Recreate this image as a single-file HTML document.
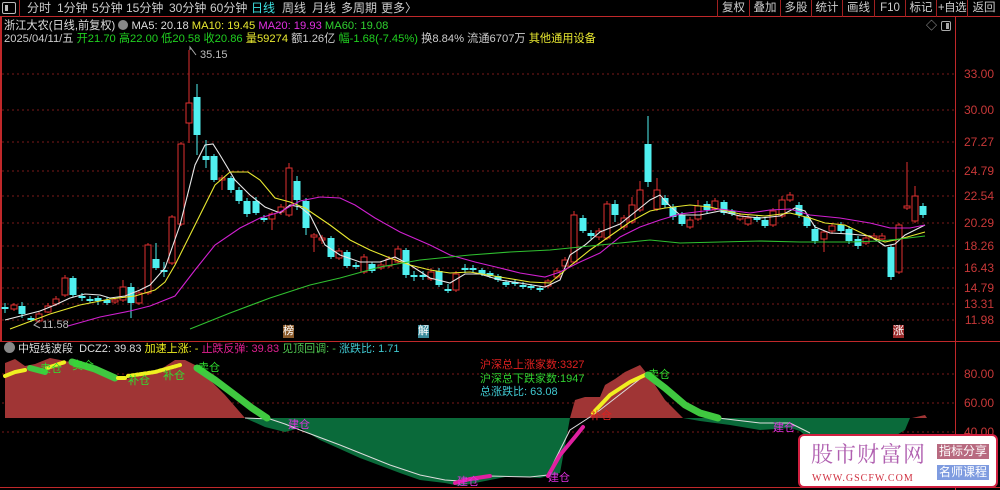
<!DOCTYPE html>
<html><head><meta charset="utf-8">
<style>
*{margin:0;padding:0;box-sizing:border-box}
body{width:1000px;height:490px;background:#000;overflow:hidden;position:relative;font-family:"Liberation Sans","Noto Sans CJK SC",sans-serif;font-size:12px;color:#ccc}
.t{position:absolute;white-space:nowrap;line-height:14px}
#tb{position:absolute;left:0;top:0;width:1000px;height:17px;border-bottom:1px solid #c0282a}
#tb span{position:absolute;top:1px;font-size:12px;line-height:14px;color:#ccc;white-space:nowrap}
.btn{position:absolute;top:0;height:17px;border-left:1px solid #a02020;color:#ccc;font-size:11.5px;text-align:center;line-height:16px;white-space:nowrap;overflow:visible}
.ax{position:absolute;right:6px;color:#c83838;font-size:12px;line-height:12px}
</style></head><body>
<div id="tb">
<div style="position:absolute;left:2px;top:2px;width:14px;height:12px;border:1px solid #bbb;border-radius:2px"><div style="position:absolute;left:2px;top:2px;width:3px;height:6px;background:#bbb"></div></div>
<div style="position:absolute;left:19px;top:0;width:1px;height:17px;background:#a02020"></div>
<span style="left:27px">分时</span><span style="left:57px">1分钟</span><span style="left:92px">5分钟</span><span style="left:126px">15分钟</span><span style="left:169px">30分钟</span><span style="left:210px">60分钟</span><span style="left:251px;color:#3ee0e0">日线</span><span style="left:282px">周线</span><span style="left:312px">月线</span><span style="left:341px">多周期</span><span style="left:381px">更多〉</span>
<div class="btn" style="left:717px;width:32px">复权</div><div class="btn" style="left:749px;width:31px">叠加</div><div class="btn" style="left:780px;width:31px">多股</div><div class="btn" style="left:811px;width:31px">统计</div><div class="btn" style="left:842px;width:32px">画线</div><div class="btn" style="left:874px;width:31px">F10</div><div class="btn" style="left:905px;width:31px">标记</div><div class="btn" style="left:936px;width:31px;letter-spacing:-0.5px">+自选</div><div class="btn" style="left:967px;width:33px">返回</div>
</div>
<div style="position:absolute;left:0;top:17px;width:2px;height:325px;background:#c0282a"></div>
<div style="position:absolute;left:955px;top:17px;width:1px;height:473px;background:#c0282a"></div>
<div style="position:absolute;left:0;top:341px;width:1000px;height:1px;background:#c0282a"></div>
<div style="position:absolute;left:0;top:487px;width:1000px;height:1px;background:#c0282a"></div>
<div class="t" style="left:4px;top:19px;color:#ddd;font-size:11.2px">浙江大农(日线,前复权) <span style="display:inline-block;width:10px;height:10px;border-radius:50%;background:#888;vertical-align:-1px"></span> MA5: 20.18 <span style="color:#e8e830">MA10: 19.45</span> <span style="color:#e030e0">MA20: 19.93</span> <span style="color:#30d030">MA60: 19.08</span></div>
<div class="t" style="left:4px;top:32px;color:#ccc;font-size:11.2px">2025/04/11/五 <span style="color:#20d020">开21.70 高22.00 低20.58 收20.86</span> <span style="color:#e8e830">量59274</span> 额1.26亿 <span style="color:#20d020">幅-1.68(-7.45%)</span> 换8.84% 流通6707万 <span style="color:#e8e830">其他通用设备</span></div>
<div class="t" style="left:926px;top:19px;color:#aaa;font-size:11px">◇</div>
<div style="position:absolute;left:941px;top:21px;width:10px;height:10px;border:1px solid #aaa;border-radius:2px"><div style="position:absolute;right:1px;top:1px;width:3px;height:6px;background:#aaa"></div></div>

<svg width="1000" height="490" style="position:absolute;left:0;top:0" id="sv">
<g stroke="#7a1a1a" stroke-dasharray="2,3" stroke-width="1">
<line x1="2" x2="955" y1="74" y2="74"/><line x1="2" x2="955" y1="110" y2="110"/><line x1="2" x2="955" y1="142" y2="142"/><line x1="2" x2="955" y1="171" y2="171"/><line x1="2" x2="955" y1="196" y2="196"/><line x1="2" x2="955" y1="223" y2="223"/><line x1="2" x2="955" y1="246" y2="246"/><line x1="2" x2="955" y1="268" y2="268"/><line x1="2" x2="955" y1="288" y2="288"/><line x1="2" x2="955" y1="304" y2="304"/><line x1="2" x2="955" y1="320" y2="320"/>
<line x1="2" x2="955" y1="374" y2="374"/><line x1="2" x2="955" y1="403" y2="403"/><line x1="2" x2="955" y1="432" y2="432"/>
</g>
<g id="cd"></g>
<g fill="none" stroke-width="1.1">
<polyline stroke="#e8e8e8" points="5,320 40,311 55,305 70,298 85,294 100,295 110,298 125,296 140,290 150,285 165,268 180,225 195,165 205,145 213,144 220,155 235,180 250,195 265,207 280,213 290,205 300,207 310,215 325,245 340,255 360,262 380,262 395,257 410,265 430,278 450,283 465,274 480,274 500,280 520,283 545,287 560,280 570,255 585,245 600,232 620,224 640,208 650,200 660,195 670,206 680,215 700,215 720,211 740,216 760,218 780,216 795,208 805,211 815,227 830,233 850,234 870,236 885,246 895,244 905,235 915,230 925,225"/>
<polyline stroke="#e8e830" points="10,329 50,314 80,305 110,299 135,296 155,290 165,282 175,265 195,225 215,185 230,172 248,172 260,180 275,198 290,202 305,208 330,225 350,240 370,250 390,258 410,265 430,270 450,273 470,272 500,277 530,282 550,283 570,266 590,250 610,236 630,222 650,211 665,208 690,205 710,207 740,214 765,216 790,213 810,218 825,223 845,225 870,237 885,242 900,239 925,232"/>
<polyline stroke="#d020d0" points="68,326 100,317 130,311 150,306 175,296 195,270 215,245 240,228 260,218 280,212 300,201 320,197 340,198 355,205 375,218 400,232 430,245 450,255 475,262 500,268 520,273 545,277 560,272 580,262 600,253 620,237 640,227 660,220 680,214 720,209 750,213 770,210 790,209 810,215 840,218 870,223 890,228 910,228 925,225"/>
<polyline stroke="#30c030" points="190,329 230,313 270,298 310,285 340,278 380,267 420,260 470,255 510,252 550,250 590,246 620,243 650,240 680,243 720,242 760,241 800,242 850,242 880,241 900,239 925,236"/>
</g>
<g stroke="#aaa" fill="none"><polyline points="190,50 190,47 196,55"/><polyline points="40,320 34,325 40,328"/></g>

<polygon fill="#a03535" points="5,418 5,363 15,359 25,366 35,364 50,358 70,362 90,364 115,378 125,379 155,373 175,360 185,360 195,365 210,380 225,395 245,418"/>
<polygon fill="#0a6a3a" points="245,418 570,418 560,473 540,478 510,476 480,482 460,486 445,483 420,480 400,473 360,458 320,440 300,428 285,432 265,427"/>
<polygon fill="#a03535" points="570,418 575,400 585,397 600,397 605,385 615,379 625,372 640,365 648,375 655,385 665,400 683,418"/>
<polygon fill="#0a6a3a" points="683,418 910,418 905,430 880,445 860,448 840,445 820,440 810,440 800,431 790,428 760,430 730,425 700,421"/>
<polygon fill="#a03535" points="912,418 925,415 927,418"/>
<polyline fill="none" stroke="#ddd" stroke-width="1" points="245,418 270,419 285,424 300,430 340,445 390,465 420,475 445,480 460,481 490,476 530,477 548,475 555,460 570,430 590,417 600,410 645,375 690,408 718,418 760,423 790,423 800,428 810,433"/>
<g fill="none" stroke-linecap="round">
<polyline stroke="#f0f020" stroke-width="4" points="5,376 15,372 25,370"/>
<polyline stroke="#40c840" stroke-width="6" points="30,368 45,372"/>
<polyline stroke="#f0f020" stroke-width="4" stroke-dasharray="2,2" points="47,368 65,362"/>
<polyline stroke="#40c840" stroke-width="7" points="72,362 95,369 115,378"/>
<polyline stroke="#f0f020" stroke-width="4" points="118,378 125,378"/>
<polyline stroke="#f0f020" stroke-width="4" stroke-dasharray="2,2" points="128,376 155,372 180,365"/>
<polyline stroke="#40c840" stroke-width="7" points="197,368 215,380 235,395 252,408 267,418"/>
<polyline stroke="#e020a0" stroke-width="4" points="455,483 470,479 490,476"/>
<polyline stroke="#e020a0" stroke-width="4" points="548,476 560,455 575,437 583,427"/>
<polyline stroke="#f0f020" stroke-width="4" points="593,413 610,395 630,382 645,375"/>
<polyline stroke="#40c840" stroke-width="7" points="648,375 665,388 685,405 700,413 718,418"/>
</g>
</svg>

<div class="t" style="left:200px;top:48px;color:#bbb;font-size:11px">35.15</div>
<div class="t" style="left:42px;top:318px;color:#bbb;font-size:11px">11.58</div>
<div class="t" style="left:283px;top:325px;width:11px;height:13px;background:#8a5a2a;color:#fff;font-size:11px;line-height:13px">榜</div>
<div class="t" style="left:418px;top:325px;width:11px;height:13px;background:#3a8a9a;color:#fff;font-size:11px;line-height:13px">解</div>
<div class="t" style="left:893px;top:325px;width:11px;height:13px;background:#9a2a2a;color:#fff;font-size:11px;line-height:13px">涨</div>

<div class="ax" style="top:68px">33.00</div><div class="ax" style="top:104px">30.00</div><div class="ax" style="top:136px">27.27</div><div class="ax" style="top:165px">24.79</div><div class="ax" style="top:190px">22.54</div><div class="ax" style="top:217px">20.29</div><div class="ax" style="top:240px">18.26</div><div class="ax" style="top:262px">16.43</div><div class="ax" style="top:282px">14.79</div><div class="ax" style="top:298px">13.31</div><div class="ax" style="top:314px">11.98</div>
<div class="ax" style="top:368px">80.00</div><div class="ax" style="top:397px">60.00</div><div class="ax" style="top:426px">40.00</div>

<div class="t" style="left:4px;top:342px;color:#ddd;font-size:11px"><span style="display:inline-block;width:11px;height:11px;border-radius:50%;background:#888;vertical-align:-1px"></span> 中短线波段 &nbsp;DCZ2: 39.83 <span style="color:#f0f020">加速上涨: -</span> <span style="color:#e02090">止跌反弹: 39.83</span> <span style="color:#50c850">见顶回调: -</span> <span style="color:#40c8d0">涨跌比: 1.71</span></div>
<div class="t" style="left:480px;top:358px;color:#e02020;font-size:11px">沪深总上涨家数:3327</div>
<div class="t" style="left:480px;top:372px;color:#30d030;font-size:11px">沪深总下跌家数:1947</div>
<div class="t" style="left:480px;top:385px;color:#40c8d0;font-size:11px">总涨跌比: 63.08</div>
<div class="t" style="left:40px;top:362px;color:#30e030;font-size:11px">卖仓</div>
<div class="t" style="left:72px;top:359px;color:#30e030;font-size:11px">卖仓</div>
<div class="t" style="left:128px;top:374px;color:#30e030;font-size:11px">补仓</div>
<div class="t" style="left:163px;top:369px;color:#30e030;font-size:11px">补仓</div>
<div class="t" style="left:198px;top:361px;color:#30e030;font-size:11px">卖仓</div>
<div class="t" style="left:288px;top:418px;color:#e030e0;font-size:11px">建仓</div>
<div class="t" style="left:457px;top:475px;color:#e030e0;font-size:11px">建仓</div>
<div class="t" style="left:548px;top:471px;color:#e030e0;font-size:11px">建仓</div>
<div class="t" style="left:590px;top:409px;color:#e02020;font-size:11px">补仓</div>
<div class="t" style="left:648px;top:368px;color:#30e030;font-size:11px">卖仓</div>
<div class="t" style="left:773px;top:421px;color:#e030e0;font-size:11px">建仓</div>

<div style="position:absolute;left:798px;top:434px;width:200px;height:54px;background:#fff;border:2px solid #d02040;border-radius:6px">
<div class="t" style="left:11px;top:7px;font-family:'Liberation Serif','Noto Serif CJK SC',serif;font-size:22px;line-height:24px;color:#b060b0;letter-spacing:1px">股市财富网</div>
<div class="t" style="left:12px;top:36px;font-family:'Liberation Serif',serif;font-size:10px;color:#d03040;letter-spacing:1px">WWW.GSCFW.COM</div>
<div class="t" style="left:137px;top:8px;width:52px;height:15px;background:#b86a80;color:#fff;font-size:12px;text-align:center;line-height:15px">指标分享</div>
<div class="t" style="left:137px;top:29px;width:52px;height:15px;background:#7f9ce0;color:#fff;font-size:12px;text-align:center;line-height:15px">名师课程</div>
</div>

<script>
var C=[[5,0,307,309,303,313],[14,1,305,309,303,311],[22,0,306,314,302,318],[31,0,318,320,316,322],[39,1,314,321,312,323],[48,1,306,312,303,313],[56,1,299,304,296,306],[65,1,278,295,275,297],[73,0,278,295,276,297],[82,0,296,298,293,301],[90,0,299,301,296,303],[98,0,298,301,296,305],[107,0,300,303,297,305],[115,1,300,302,298,304],[123,1,287,300,280,302],[131,0,287,303,283,318],[139,1,293,303,290,305],[148,1,245,293,243,295],[156,0,259,268,243,270],[164,0,270,272,262,277],[172,1,217,263,215,265],[181,1,144,224,142,226],[189,1,103,123,50,143],[197,0,97,135,84,155],[206,0,156,160,140,168],[214,0,156,180,154,182],[222,1,178,180,175,190],[231,0,178,190,176,193],[239,0,190,201,187,204],[247,0,201,214,198,217],[256,0,201,213,197,215],[264,0,218,220,215,222],[272,1,214,219,212,230],[281,1,207,212,204,215],[289,1,168,215,163,217],[297,0,181,200,176,210],[306,0,201,228,198,235],[314,1,235,237,233,252],[322,1,238,240,235,244],[331,0,238,257,236,259],[339,1,251,258,248,260],[347,0,252,266,250,268],[356,0,265,267,262,269],[364,1,257,272,254,274],[372,0,264,271,262,273],[381,1,265,268,261,270],[389,1,259,266,256,268],[398,1,249,262,246,264],[406,0,250,275,248,278],[414,0,275,277,271,281],[423,0,275,277,271,280],[431,1,272,279,268,281],[439,0,271,285,268,287],[448,0,289,291,284,293],[456,1,274,290,271,292],[465,0,268,270,264,273],[473,0,268,270,265,272],[482,0,270,274,268,276],[490,0,273,276,271,278],[498,0,276,280,274,282],[506,0,282,285,280,287],[515,0,282,284,280,286],[523,0,285,287,282,289],[531,0,286,288,284,290],[540,0,288,290,286,292],[548,1,281,286,279,288],[557,1,271,277,268,279],[565,1,260,266,257,268],[574,1,215,262,211,264],[583,0,218,231,215,233],[591,0,233,236,230,239],[599,1,231,237,228,240],[607,1,204,238,201,240],[615,0,204,215,200,222],[624,1,218,227,215,230],[632,1,205,222,197,224],[640,1,190,210,181,212],[648,0,144,182,116,187],[657,1,190,209,178,211],[665,0,198,205,195,208],[673,0,207,217,204,220],[682,0,215,224,212,226],[690,1,220,227,217,229],[698,1,206,219,200,221],[707,0,204,210,201,213],[715,1,201,209,198,211],[724,0,202,213,200,215],[732,0,211,214,209,216],[740,1,216,219,213,221],[748,1,218,224,215,226],[757,0,217,220,215,222],[765,0,220,226,218,228],[773,1,211,225,208,227],[782,1,200,216,196,218],[790,1,195,200,192,202],[799,0,205,215,202,218],[807,0,217,226,214,228],[815,0,229,241,225,244],[824,1,232,239,230,252],[832,1,226,231,223,234],[841,0,225,231,222,233],[849,0,229,241,226,244],[858,0,239,246,236,249],[866,1,238,243,235,245],[874,1,236,238,233,240],[882,1,236,239,233,241],[891,0,247,277,245,280],[899,1,225,272,223,274],[907,1,206,208,162,210],[915,1,196,221,186,223],[923,0,206,215,203,218]];
var s='';C.forEach(function(c){var x=c[0],u=c[1],t=c[2],b=c[3],h=c[4],l=c[5];var col=u?'#e03030':'#50f0f0';
s+='<line x1="'+x+'" x2="'+x+'" y1="'+h+'" y2="'+l+'" stroke="'+col+'" stroke-width="1"/>';
if(b-t<2){s+='<line x1="'+(x-3)+'" x2="'+(x+3)+'" y1="'+t+'" y2="'+t+'" stroke="'+col+'" stroke-width="1.5"/>';}
else if(u){s+='<rect x="'+(x-3)+'" y="'+t+'" width="6" height="'+(b-t)+'" fill="#000" stroke="'+col+'" stroke-width="1"/>';}
else{s+='<rect x="'+(x-3.5)+'" y="'+t+'" width="7" height="'+(b-t)+'" fill="'+col+'"/>';}});
document.getElementById('cd').innerHTML=s;
</script>
</body></html>
